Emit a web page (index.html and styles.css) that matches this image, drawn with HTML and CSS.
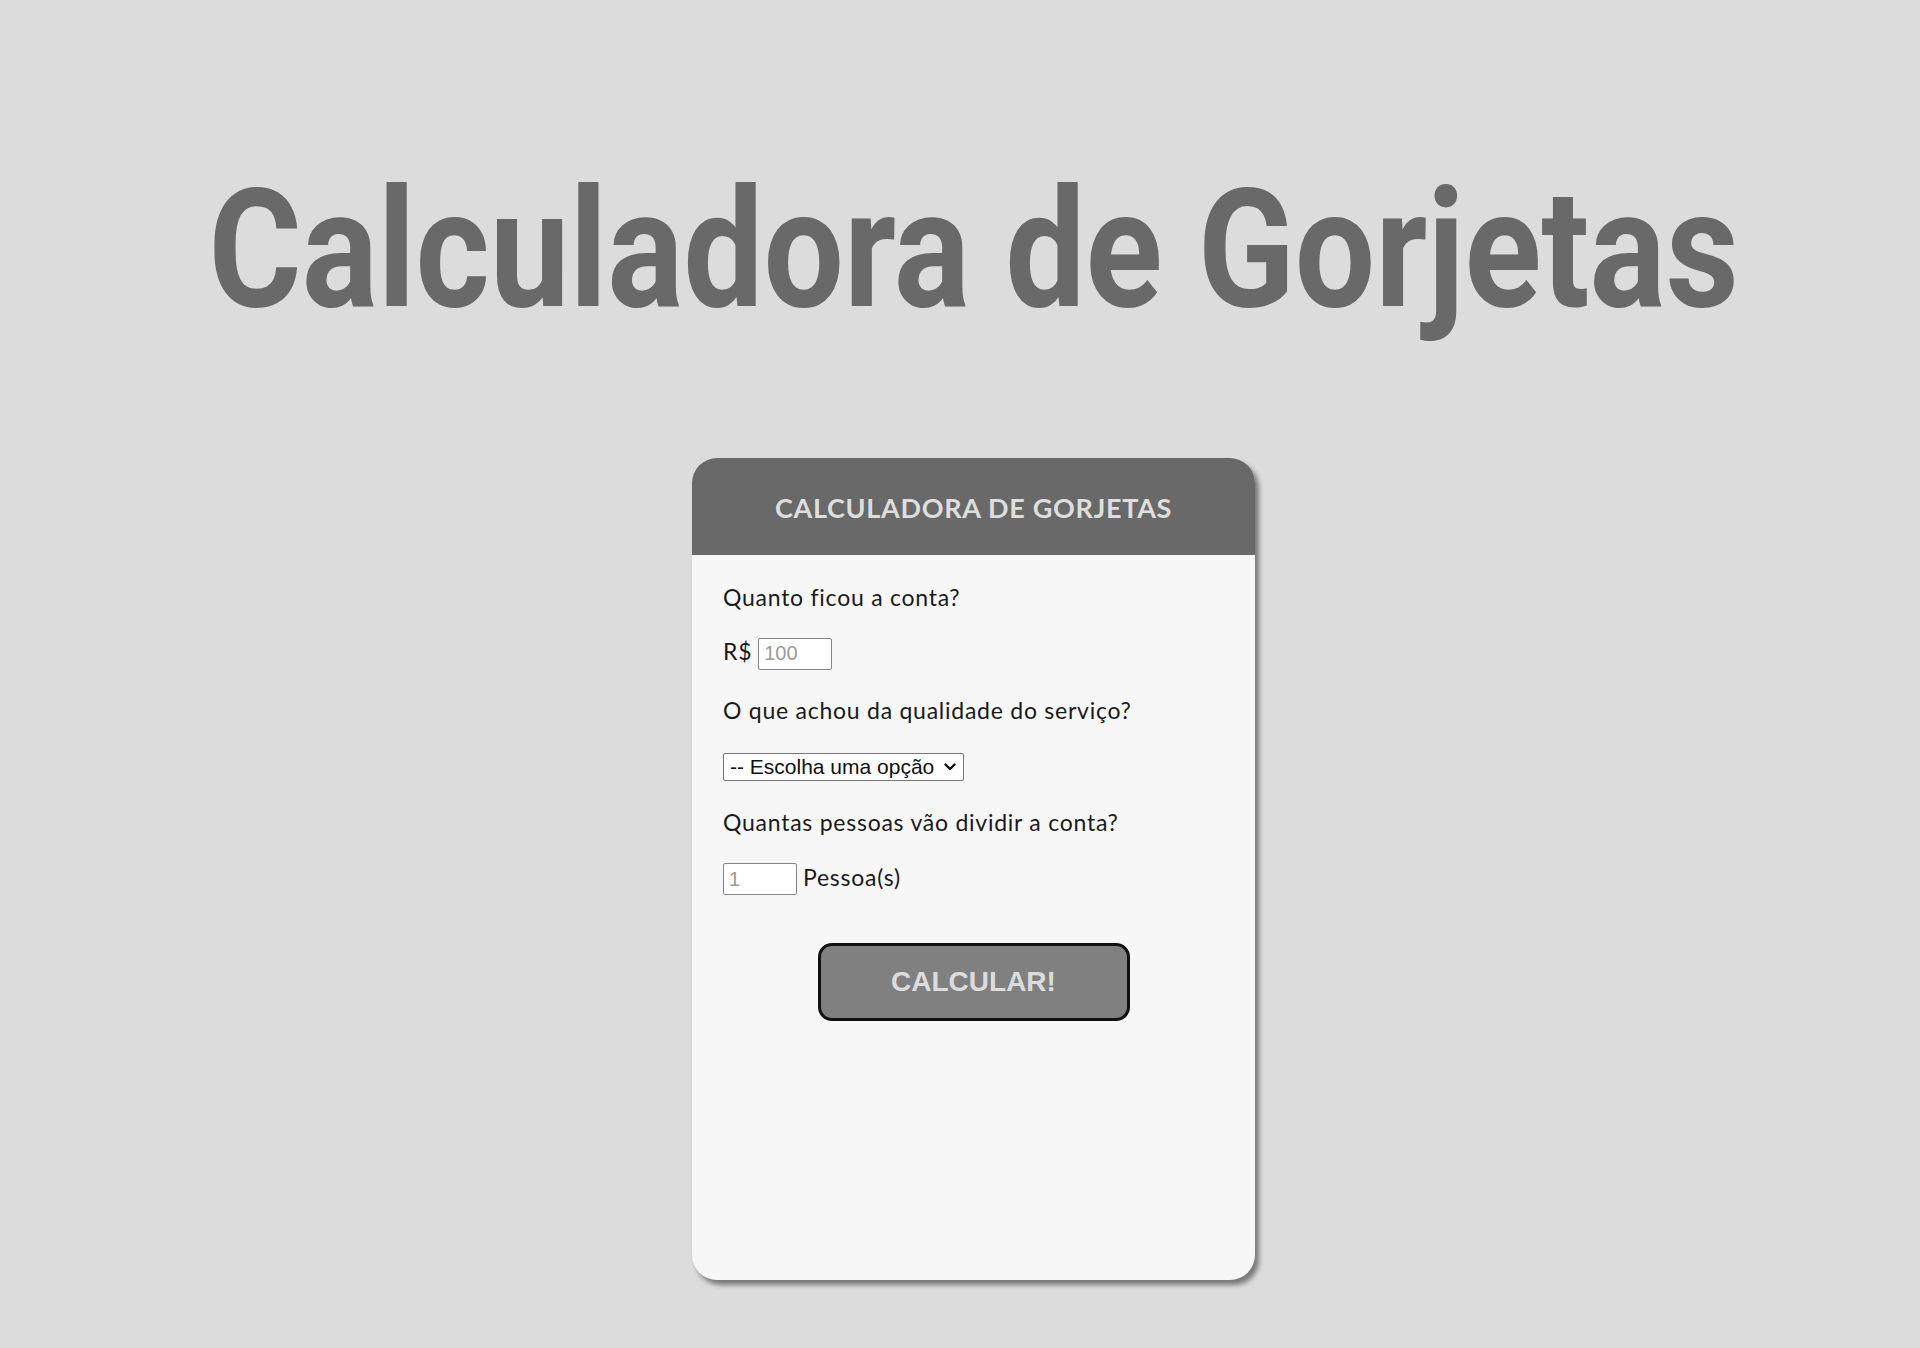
FILE: index.html
```html
<!DOCTYPE html>
<html lang="pt-BR">
<head>
<meta charset="utf-8">
<title>Calculadora de Gorjetas</title>
<link rel="stylesheet" href="styles.css">
</head>
<body>
<main class="page">
  <h1 class="title"><span class="title-text">Calculadora de Gorjetas</span></h1>
  <section class="card">
    <header class="card-header">
      <h2 class="card-title">CALCULADORA DE GORJETAS</h2>
    </header>
    <form class="card-body">
      <p class="question q1">Quanto ficou a conta?</p>
      <div class="row row1">
        <span class="prefix">R$</span>
        <input class="field" type="text" placeholder="100">
      </div>
      <p class="question q2">O que achou da qualidade do serviço?</p>
      <div class="row select-row">
        <span class="select-wrap">
          <select class="choice">
            <option>-- Escolha uma opção</option>
            <option>30% - Muito bom</option>
            <option>20% - Bom</option>
            <option>15% - Regular</option>
            <option>10% - Ruim</option>
            <option>5% - Péssimo</option>
          </select>
          <svg class="chevron" width="12" height="8" viewBox="0 0 12 8" aria-hidden="true">
            <path d="M1.5 1.5 L6 6 L10.5 1.5" fill="none" stroke="#111" stroke-width="2.4" stroke-linecap="round" stroke-linejoin="round"/>
          </svg>
        </span>
      </div>
      <p class="question q3">Quantas pessoas vão dividir a conta?</p>
      <div class="row row3">
        <input class="field" type="text" placeholder="1">
        <span class="suffix">Pessoa(s)</span>
      </div>
      <div class="actions">
        <button class="btn" type="button">CALCULAR!</button>
      </div>
    </form>
  </section>
</main>
</body>
</html>
```

FILE: styles.css
```css
* { box-sizing: border-box; }

html, body {
  margin: 0;
  padding: 0;
  background: #dcdcdc;
}

body {
  font-family: "Lato", "Liberation Sans", sans-serif;
  color: #1a1a1a;
}

.page {
  display: flex;
  flex-direction: column;
  align-items: center;
  padding: 153px 0 60px 27px;
}

.title {
  margin: 0;
  font-family: "Roboto", "Liberation Sans", sans-serif;
  font-weight: 700;
  font-size: 165px;
  line-height: normal;
  color: #696969;
  text-align: center;
  white-space: nowrap;
}

.title-text {
  display: inline-block;
  transform: scaleX(0.863);
  transform-origin: center;
}

.card {
  margin-top: 112px;
  width: 563px;
  height: 822px;
  background: #f7f7f7;
  border-radius: 25px;
  box-shadow: 4px 5px 5px rgba(0, 0, 0, 0.45);
  overflow: hidden;
  display: flex;
  flex-direction: column;
}

.card-header {
  background: #696969;
  height: 97px;
  display: flex;
  align-items: center;
  justify-content: center;
  padding-top: 1px;
}

.card-title {
  margin: 0;
  font-family: "Lato", sans-serif;
  font-weight: 700;
  font-size: 27px;
  letter-spacing: 0.7px;
  color: #dedede;
  line-height: normal;
}

.card-body {
  display: flex;
  flex-direction: column;
  align-items: flex-start;
  padding: 0 31px;
}

.question {
  margin: 28px 0 0;
  font-size: 23px;
  letter-spacing: 0.75px;
  line-height: normal;
}

.q1 { margin-top: 28px; }
.q2 { margin-top: 26px; }
.q3 { margin-top: 27px; }

.row {
  display: flex;
  align-items: baseline;
  font-size: 23px;
  letter-spacing: 0.75px;
  line-height: normal;
}

.row1 { margin-top: 26px; }
.select-row { margin-top: 29px; }
.row3 { margin-top: 27px; }

.prefix {
  margin-right: 6px;
}

.suffix {
  margin-left: 6px;
}

.field {
  width: 74px;
  height: 32px;
  padding: 0 5px;
  border: 1px solid #858585;
  border-radius: 2px;
  background: #fff;
  font-family: "Liberation Sans", Arial, sans-serif;
  font-size: 20px;
  letter-spacing: 0;
  color: #333;
}

.field::placeholder {
  color: #9a9a9a;
}

.select-wrap {
  position: relative;
  display: inline-flex;
}

.choice {
  appearance: none;
  -webkit-appearance: none;
  width: 241px;
  height: 28px;
  padding: 0 0 0 6px;
  border: 1px solid #767676;
  border-radius: 2px;
  background: #fff;
  font-family: "Liberation Sans", Arial, sans-serif;
  font-size: 21px;
  letter-spacing: 0;
  color: #111;
}

.chevron {
  position: absolute;
  right: 8px;
  top: 10px;
  pointer-events: none;
}

.actions {
  align-self: stretch;
  display: flex;
  justify-content: center;
  margin-top: 48px;
}

.btn {
  width: 312px;
  height: 78px;
  background: #808080;
  border: 3px solid #111;
  border-radius: 14px;
  font-family: "Liberation Sans", Arial, sans-serif;
  font-weight: 700;
  font-size: 28px;
  color: #dcdcdc;
  cursor: pointer;
}
```
